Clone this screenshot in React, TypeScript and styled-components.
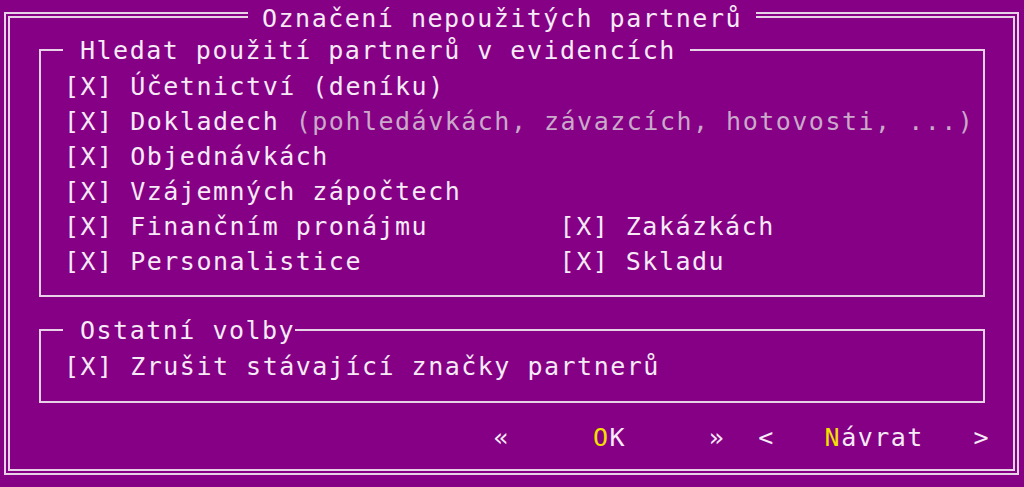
import styled, { createGlobalStyle } from 'styled-components';

const BG = '#850085';
const LINE = '#e8d2e8';
const TEXT = '#f6eaf6';
const DIM = '#caa9ca';
const HOT = '#f2e000';
const CELL = 16.52;

const GlobalStyle = createGlobalStyle`
  html, body {
    margin: 0;
    padding: 0;
    background: ${BG};
  }
`;

const Screen = styled.div`
  width: 1024px;
  height: 487px;
  box-sizing: border-box;
  padding: 12px 0 0 4px;
  overflow: hidden;
  background: ${BG};
  color: ${TEXT};
  font-family: 'DejaVu Sans Mono', 'Liberation Mono', monospace;
  font-size: 25px;
  letter-spacing: 1.5px;
  line-height: 35px;
  white-space: pre;
`;

const Window = styled.div`
  position: relative;
  width: 1015px;
  height: 463px;
  box-sizing: border-box;
  padding: 2px;
  border: 2px solid ${LINE};
`;

const WindowBody = styled.div`
  display: flex;
  flex-direction: column;
  height: 100%;
  box-sizing: border-box;
  padding: 31px 0 0 29px;
  border: 2px solid ${LINE};
`;

// title label sitting over a frame line
const Caption = styled.span<{ $padRight?: boolean }>`
  position: absolute;
  padding: 0 ${(p) => (p.$padRight === false ? '0' : '14px')} 0 17px;
  background: ${BG};
`;

const WindowCaption = styled(Caption)`
  top: -13px;
  left: 242px;
  padding: 0 14px;
`;

const Group = styled.div<{ $height: number; $gap?: number }>`
  position: relative;
  width: 946px;
  height: ${(p) => p.$height}px;
  box-sizing: border-box;
  margin-top: ${(p) => p.$gap ?? 0}px;
  padding: 18px 0 0 23px;
  border: 2px solid ${LINE};
`;

const GroupCaption = styled(Caption)`
  top: -18px;
  left: 22px;
`;

const Columns = styled.div`
  display: grid;
  grid-template-columns: ${30 * CELL}px auto;
`;

const Check = styled.div``;

const Hint = styled.span`
  color: ${DIM};
`;

const ButtonBar = styled.div`
  display: flex;
  gap: ${2 * CELL}px;
  margin-top: 17px;
  padding-left: ${30 * CELL - 10 - 29 - 2}px;
`;

const Button = styled.span``;

const Hot = styled.span`
  color: ${HOT};
`;

type CheckItemProps = { label: string; hint?: string };

const CheckItem = ({ label, hint }: CheckItemProps) => (
  <Check>
    [X] {label}
    {hint && <Hint> {hint}</Hint>}
  </Check>
);

export default function App() {
  return (
    <>
      <GlobalStyle />
      <Screen>
        <Window>
          <WindowCaption>Označení nepoužitých partnerů</WindowCaption>
          <WindowBody>
            <Group $height={248}>
              <GroupCaption>Hledat použití partnerů v evidencích</GroupCaption>
              <CheckItem label="Účetnictví (deníku)" />
              <CheckItem
                label="Dokladech"
                hint="(pohledávkách, závazcích, hotovosti, ...)"
              />
              <CheckItem label="Objednávkách" />
              <CheckItem label="Vzájemných zápočtech" />
              <Columns>
                <CheckItem label="Finančním pronájmu" />
                <CheckItem label="Zakázkách" />
                <CheckItem label="Personalistice" />
                <CheckItem label="Skladu" />
              </Columns>
            </Group>
            <Group $height={74} $gap={32}>
              <GroupCaption $padRight={false}>Ostatní volby</GroupCaption>
              <CheckItem label="Zrušit stávající značky partnerů" />
            </Group>
            <ButtonBar>
              <Button>
                {'«     '}
                <Hot>O</Hot>
                {'K     »'}
              </Button>
              <Button>
                {'<   '}
                <Hot>N</Hot>
                {'ávrat   >'}
              </Button>
            </ButtonBar>
          </WindowBody>
        </Window>
      </Screen>
    </>
  );
}
